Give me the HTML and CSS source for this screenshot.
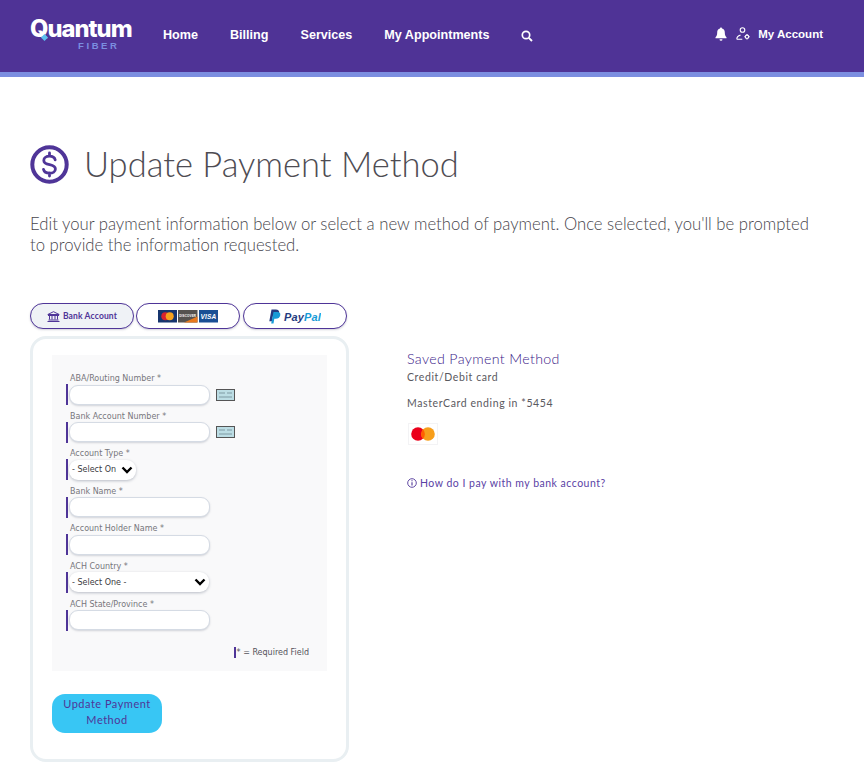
FILE: index.html
```html
<!DOCTYPE html>
<html lang="en">
<head>
<meta charset="utf-8">
<title>Update Payment Method</title>
<link rel="stylesheet" href="styles.css">
</head>
<body>
<header class="topbar">
  <div class="logo">
    <span class="logo-word">Quantum</span>
    <span class="logo-sub">FIBER</span>
    <span class="logo-dot"></span>
  </div>
  <nav class="nav">
    <a>Home</a><a>Billing</a><a>Services</a><a>My Appointments</a>
    <svg class="nav-search" width="12" height="12" viewBox="0 0 12 12"><circle cx="5" cy="5" r="3.700" fill="none" stroke="#fff" stroke-width="1.700"/><path d="M7.800 7.800L11 11" stroke="#fff" stroke-width="1.900"/></svg>
  </nav>
  <div class="acct">
    <svg width="12" height="14" viewBox="0 0 12 14"><path d="M6 0.500c.7 0 1 .5 1 1 2 .5 2.800 2 2.800 4 0 2.500.7 3.700 1.700 4.700v1H.5v-1c1-1 1.700-2.200 1.700-4.700 0-2 .8-3.500 2.800-4 0-.5.3-1 1-1z" fill="#fff"/><path d="M4.500 12.300h3a1.500 1.500 0 0 1-3 0z" fill="#fff"/></svg>
    <svg class="acct-user" width="14" height="13" viewBox="0 0 14 13" fill="none" stroke="#fff" stroke-width="1.100"><circle cx="6.500" cy="3" r="2.300"/><path d="M.8 12.300h5.500M.8 12.300c0-2 1.200-3.600 3.700-4.200"/><circle cx="11" cy="9.800" r="1.700"/><path d="M11 7v1M11 11.500v1M8.300 9.800h1M12.700 9.800h1"/></svg>
    <span>My Account</span>
  </div>
</header>
<div class="strip"></div>

<main class="page">
  <h1 class="title">
    <svg width="39" height="39" viewBox="0 0 39 39"><circle cx="19.500" cy="19.500" r="17.200" fill="none" stroke="#4f3598" stroke-width="4"/><path d="M25.200 14.800c-.6-2.300-2.900-3.600-5.700-3.600-3.200 0-5.700 1.700-5.700 4.200 0 5.900 11.600 2.700 11.600 8.500 0 2.600-2.600 4.300-5.900 4.300-3 0-5.400-1.400-6-3.800M19.500 8v3.200M19.500 27.800V31" fill="none" stroke="#4f3598" stroke-width="2.800" stroke-linecap="round"/></svg>
    <span>Update Payment Method</span>
  </h1>
  <p class="intro">Edit your payment information below or select a new method of payment. Once selected, you'll be prompted to provide the information requested.</p>

  <div class="columns">
    <section class="left">
      <div class="tabs">
        <button class="tab active">
          <svg width="13" height="11" viewBox="0 0 13 11" fill="none" stroke="#4f3598" stroke-width="1"><path d="M.8 3.500L6.500.7l5.700 2.800zM1 4.500h11M2.500 5v3.500M5 5v3.500M8 5v3.500M10.500 5v3.500M1.500 9h10M.5 10.500h12"/></svg>
          <span>Bank Account</span>
        </button>
        <button class="tab">
          <svg width="60" height="13" viewBox="0 0 60 13">
            <rect width="19" height="12.500" fill="#16356e"/><circle cx="7.300" cy="6.200" r="4" fill="#d9232e"/><circle cx="11.700" cy="6.200" r="4" fill="#f6a21e"/>
            <rect x="20" width="19.500" height="12.500" fill="#55524f"/><path d="M26 12.500L39.500 6.500v6z" fill="#e8791e"/><text x="29.700" y="7" class="disc">DISCOVER</text>
            <rect x="41" width="19" height="12.500" fill="#1a4f94"/><text x="50.500" y="9.300" class="visa">VISA</text>
          </svg>
        </button>
        <button class="tab">
          <svg width="52" height="15" viewBox="0 0 52 15"><path d="M2.500.5h4.300c2.500 0 3.700 1.300 3.300 3.400-.5 2.500-2.300 3.700-4.700 3.700H3.800L3 12.300H.3z" fill="#253b80"/><path d="M4.500 3h3.700c2.300 0 3.500 1.200 3.100 3.200-.5 2.400-2.200 3.500-4.500 3.500H5.300l-.8 4.700H2.200z" fill="#179bd7"/><text x="15" y="12" class="pp"><tspan fill="#253b80">Pay</tspan><tspan fill="#179bd7">Pal</tspan></text></svg>
        </button>
      </div>

      <div class="card">
        <form class="panel">
          <div class="field"><label>ABA/Routing Number *</label><div class="row"><input class="input"><svg class="check" width="19" height="12" viewBox="0 0 19 12"><rect x=".5" y=".5" width="18" height="11" fill="#bcdde4" stroke="#555"/><path d="M3 4h6M11 4h5M3 8h13" stroke="#7f9aa3"/></svg></div></div>
          <div class="field"><label>Bank Account Number *</label><div class="row"><input class="input"><svg class="check" width="19" height="12" viewBox="0 0 19 12"><rect x=".5" y=".5" width="18" height="11" fill="#bcdde4" stroke="#555"/><path d="M3 4h6M11 4h5M3 8h13" stroke="#7f9aa3"/></svg></div></div>
          <div class="field"><label>Account Type *</label><div class="row"><select class="select short"><option>- Select One -</option></select></div></div>
          <div class="field"><label>Bank Name *</label><div class="row"><input class="input"></div></div>
          <div class="field"><label>Account Holder Name *</label><div class="row"><input class="input"></div></div>
          <div class="field"><label>ACH Country *</label><div class="row"><select class="select"><option>- Select One -</option></select></div></div>
          <div class="field"><label>ACH State/Province *</label><div class="row"><input class="input"></div></div>
          <p class="legend"><span>* = Required Field</span></p>
        </form>
        <button class="submit">Update Payment Method</button>
      </div>
    </section>

    <aside class="right">
      <h2>Saved Payment Method</h2>
      <p class="type">Credit/Debit card</p>
      <p class="ending">MasterCard ending in *5454</p>
      <div class="mc">
        <svg width="24" height="14" viewBox="0 0 24 14"><circle cx="7" cy="7" r="6.800" fill="#eb001b"/><circle cx="17" cy="7" r="6.800" fill="#f79e1b"/><path d="M12 2.300a6.800 6.800 0 0 1 0 9.400 6.800 6.800 0 0 1 0-9.400z" fill="#ff5f00"/></svg>
      </div>
      <a class="help">
        <svg width="10" height="10" viewBox="0 0 10 10" fill="none" stroke="#4f3598"><circle cx="5" cy="5" r="4.300" stroke-width=".9"/><path d="M5 4.300v3.200M5 2.300v1" stroke-width="1.100"/></svg>
        <span>How do I pay with my bank account?</span>
      </a>
    </aside>
  </div>
</main>
</body>
</html>
```
FILE: styles.css
```css
* { box-sizing: border-box; }
html, body { margin: 0; height: 778px; overflow: hidden; background: #fff; }
body { font-family: "Lato", "Liberation Sans", sans-serif; color: #55535a; }

.topbar { height: 72px; background: #4f3396; display: flex; align-items: center; color: #fff; padding: 0 41px 2px 30px; }
.strip { height: 5px; background: #7b8ee0; }

.logo { position: relative; width: 102px; height: 32px; display: flex; flex-direction: column; }
.logo-word { font: 800 23.700px/20px "Inter", sans-serif; letter-spacing: -1px; white-space: nowrap; }
.logo-sub { font: 700 9.500px/9px "Liberation Sans", sans-serif; letter-spacing: 2.600px; color: #7b8ee0; margin-left: 48px; margin-top: 2px; }
.logo-dot { position: absolute; left: 12px; top: 16px; width: 5px; height: 5px; background: #5cc0ee; transform: rotate(45deg); }

.nav { display: flex; align-items: center; gap: 32px; margin-left: 31px; font: 700 12.600px/16px "Liberation Sans", sans-serif; }
.nav-search { margin-top: 1px; margin-left: -1px; }
.acct { margin-left: auto; margin-top: -3px; display: flex; align-items: center; font: 700 11.500px/14px "Liberation Sans", sans-serif; }
.acct-user { margin: 0 8px 0 9px; }

.page { padding: 0 30px; }
.title { margin: 66px 0 0; display: flex; align-items: center; gap: 15px; font-weight: 300; font-size: 34.500px; line-height: 42px; color: #4e4c53; }
.intro { margin: 29px 0 0; font-weight: 300; font-size: 16.700px; line-height: 21px; color: #47454c; width: 790px; }

.columns { display: flex; margin-top: 47px; }
.left { width: 319px; }
.tabs { display: flex; gap: 2px; }
.tab { width: 104px; height: 26px; border: 1.500px solid #4f3598; border-radius: 14px; background: #fff; display: flex; align-items: center; justify-content: center; gap: 3px; padding: 0; font: 700 8.500px/10px "Lato", sans-serif; letter-spacing: .15px; color: #4f3598; box-shadow: 0 1px 2px rgba(80,80,110,.25); }
.tab + .tab + .tab { margin-left: 1px; }
.tab.active { background: #eff2f6; }
.visa { font: italic 700 6.500px "Liberation Sans", sans-serif; fill: #fff; text-anchor: middle; }
.disc { font: 700 3px "Liberation Sans", sans-serif; fill: #fff; text-anchor: middle; }
.pp { font: italic 700 11px "Liberation Sans", sans-serif; }

.card { margin-top: 7px; height: 426px; border: 3px solid #e9eff2; border-radius: 16px; padding: 16px 19px 0; }
.panel { width: 275px; height: 316px; background: #f9f9fa; padding: 18px 0 0 14px; }
.field { height: 37.600px; }
.field label { display: block; margin-left: 4px; font: 8px/11px "DejaVu Sans", sans-serif; color: #77767c; }
.row { display: flex; align-items: center; gap: 6px; height: 21px; border-left: 2px solid #4f3598; padding-left: 1px; }
.input { width: 141px; height: 20px; background: #fff; border: 1px solid #d5dbe4; border-radius: 9px; box-shadow: 0 1px 2px rgba(90,100,120,.25); padding: 0 6px; }
.select { width: 140px; height: 20px; appearance: none; -webkit-appearance: none; font: 8px "DejaVu Sans", sans-serif; color: #3b3a40; border: 0; border-radius: 9px; box-shadow: 0 1px 3px rgba(90,100,120,.4); padding: 0 20px 0 3px; background: #fff url("data:image/svg+xml,%3Csvg xmlns='http://www.w3.org/2000/svg' width='12' height='8' viewBox='0 0 12 8'%3E%3Cpath d='M1.500 1.500L6 6l4.500-4.500' fill='none' stroke='%23000' stroke-width='2.400'/%3E%3C/svg%3E") no-repeat right 3px center; }
.select.short { width: 67px; }
.legend { margin: 11px 0 0; display: flex; justify-content: flex-end; padding-right: 18px; font: 8px/11px "DejaVu Sans", sans-serif; color: #55535a; }
.legend span { border-left: 2px solid #4f3598; padding-left: 1px; }

.submit { display: block; margin-top: 23px; width: 110px; height: 39px; border: 0; border-radius: 13px; background: #38c6f4; color: #4f3598; font: 400 11px/16px "Lato", sans-serif; letter-spacing: .5px; padding: 0 8px 3px; }

.right { margin-left: 58px; padding-top: 47px; }
.right h2 { margin: 0; font-weight: 300; font-size: 14.200px; line-height: 17px; color: #3a2088; letter-spacing: .35px; }
.type, .ending { margin: 0; font-size: 10.500px; line-height: 14px; color: #5a5960; letter-spacing: .6px; }
.type { margin-top: 3px; }
.ending { margin-top: 12px; }
.mc { margin-top: 13px; margin-left: 1px; width: 30px; height: 22px; border: 1px solid #f3f3f5; display: flex; align-items: center; justify-content: center; }
.help { display: flex; align-items: center; gap: 3px; margin-top: 31px; font-size: 10.500px; line-height: 14px; color: #5a42a5; letter-spacing: .5px; }
```
